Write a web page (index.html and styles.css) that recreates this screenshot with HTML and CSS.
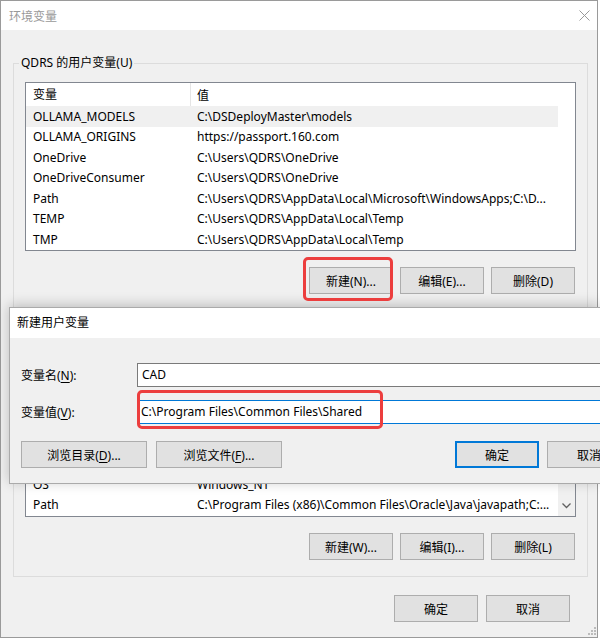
FILE: index.html
```html
<!DOCTYPE html>
<html lang="zh-CN">
<head>
  <meta charset="UTF-8" />
  <title>环境变量</title>
  <link rel="stylesheet" href="styles.css">
</head>
<body>
  <div class="window">
    <div class="titlebar">
      <span class="title">环境变量</span>
      <svg class="close" width="11" height="11" viewBox="0 0 11 11"><path d="M0.5 0.5L10.5 10.5M10.5 0.5L0.5 10.5" stroke="#999" stroke-width="1" fill="none"/></svg>
    </div>

    <div class="content">
      <!-- user variables -->
      <fieldset class="group">
        <legend>QDRS 的用户变量(U)</legend>
        <div class="list">
          <div class="list-main">
            <div class="list-head">
              <span class="head-name">变量</span>
              <span class="head-value">值</span>
            </div>
            <div class="row selected"><span class="name">OLLAMA_MODELS</span><span class="value">C:\DSDeployMaster\models</span></div>
            <div class="row"><span class="name">OLLAMA_ORIGINS</span><span class="value">https://passport.160.com</span></div>
            <div class="row"><span class="name">OneDrive</span><span class="value">C:\Users\QDRS\OneDrive</span></div>
            <div class="row"><span class="name">OneDriveConsumer</span><span class="value">C:\Users\QDRS\OneDrive</span></div>
            <div class="row"><span class="name">Path</span><span class="value">C:\Users\QDRS\AppData\Local\Microsoft\WindowsApps;C:\D...</span></div>
            <div class="row"><span class="name">TEMP</span><span class="value">C:\Users\QDRS\AppData\Local\Temp</span></div>
            <div class="row"><span class="name">TMP</span><span class="value">C:\Users\QDRS\AppData\Local\Temp</span></div>
          </div>
          <div class="list-side"></div>
        </div>
        <div class="btn-row">
          <button class="btn">新建(N)...</button>
          <button class="btn">编辑(E)...</button>
          <button class="btn">删除(D)</button>
        </div>
      </fieldset>

      <!-- system variables (top part sits under the dialog) -->
      <fieldset class="group group-sys">
        <div class="list">
          <div class="list-main list-bottom">
            <div class="row"><span class="name">OS</span><span class="value">Windows_NT</span></div>
            <div class="row"><span class="name">Path</span><span class="value">C:\Program Files (x86)\Common Files\Oracle\Java\javapath;C:...</span></div>
          </div>
          <div class="list-side scrollbar">
            <div class="scroll-track"></div>
            <div class="scroll-btn">
              <svg width="9" height="6" viewBox="0 0 9 6"><path d="M0.5 0.5L4.5 4.5L8.5 0.5" stroke="#606060" stroke-width="1.3" fill="none"/></svg>
            </div>
          </div>
        </div>
        <div class="btn-row">
          <button class="btn">新建(W)...</button>
          <button class="btn">编辑(I)...</button>
          <button class="btn">删除(L)</button>
        </div>
      </fieldset>

      <div class="footer">
        <button class="btn">确定</button>
        <button class="btn">取消</button>
      </div>
    </div>

    <svg class="grip" width="8" height="8" viewBox="0 0 8 8">
      <rect x="6" y="0" width="2" height="2" fill="#bbb"/>
      <rect x="3" y="3" width="2" height="2" fill="#bbb"/>
      <rect x="6" y="3" width="2" height="2" fill="#bbb"/>
      <rect x="0" y="6" width="2" height="2" fill="#bbb"/>
      <rect x="3" y="6" width="2" height="2" fill="#bbb"/>
      <rect x="6" y="6" width="2" height="2" fill="#bbb"/>
    </svg>

    <!-- new user variable dialog -->
    <div class="dialog">
      <div class="dlg-inner">
        <div class="dlg-title">新建用户变量</div>
        <div class="dlg-body">
          <div class="field">
            <label>变量名(<u>N</u>):</label>
            <div class="input">CAD</div>
          </div>
          <div class="field field-2">
            <label>变量值(<u>V</u>):</label>
            <div class="input focused">C:\Program Files\Common Files\Shared</div>
          </div>
          <div class="dlg-btns">
            <div class="dlg-left">
              <button class="btn btn-wide">浏览目录(<u>D</u>)...</button>
              <button class="btn btn-wide">浏览文件(<u>F</u>)...</button>
            </div>
            <div class="dlg-right">
              <button class="btn btn-default">确定</button>
              <button class="btn">取消</button>
            </div>
          </div>
        </div>
      </div>
    </div>

    <div class="mark mark-new"></div>
    <div class="mark mark-value"></div>
  </div>
</body>
</html>
```

FILE: styles.css
```css
* { margin: 0; padding: 0; box-sizing: border-box; }

html, body { overflow: hidden; }

body {
  background: #fff;
  font-family: "Noto Sans", "Noto Sans CJK SC", sans-serif;
  font-size: 12px;
  color: #000;
}

.window {
  position: relative;
  width: 598px;
  height: 638px;
  border: 1px solid #9a9a9a;
  background: #f0f0f0;
  display: flex;
  flex-direction: column;
}

.titlebar {
  height: 29px;
  background: #fff;
  display: flex;
  align-items: center;
  justify-content: space-between;
  padding: 0 7px 0 8px;
}
.title { color: #999; }
.close { display: block; margin-top: -1px; }

.content { padding: 0 9px 0 12px; }

/* group boxes ------------------------------------------------------*/
.group {
  margin-top: 25px;
  border: 1px solid #dcdcdc;
  padding: 11px 11px 16px;
  min-width: 0;
}
.group-sys { margin-top: 17px; padding-top: 19px; }
.group legend {
  margin-left: -6px;
  padding: 0 2px;
  line-height: 16px;
}

/* list views -------------------------------------------------------*/
.list {
  height: 169px;
  border: 1px solid #828790;
  background: #fff;
  display: flex;
  overflow: hidden;
}
.list-main { width: 532px; }
.list-bottom {
  display: flex;
  flex-direction: column;
  justify-content: flex-end;
  padding-bottom: 1px;
}
.list-side { flex: 1; }

.list-head { height: 23px; display: flex; align-items: center; }
.head-name {
  width: 165px;
  padding-left: 7px;
  line-height: 23px;
  border-right: 1px solid #e5e5e5;
}
.head-value { padding-left: 6px; }

.row {
  height: 20.5px;
  display: flex;
  align-items: center;
  white-space: nowrap;
}
.row.selected { background: #f0f0f0; }
.row .name { width: 164px; padding-left: 7px; flex-shrink: 0; }
.row .value { padding-left: 7px; overflow: hidden; }

.scrollbar {
  background: #f0f0f0;
  display: flex;
  flex-direction: column;
}
.scroll-track { flex: 1; }
.scroll-btn {
  height: 17px;
  display: flex;
  align-items: center;
  justify-content: center;
  margin-bottom: 2px;
}

/* buttons ----------------------------------------------------------*/
.btn-row {
  margin-top: 16px;
  padding-right: 1px;
  display: flex;
  justify-content: flex-end;
  gap: 7px;
}
.btn {
  width: 84px;
  height: 27px;
  background: #e1e1e1;
  border: 1px solid #adadad;
  font: inherit;
  color: #000;
  flex-shrink: 0;
}
.btn u { text-decoration: underline; text-underline-offset: 2px; }
.btn-wide { width: 126px; }
.btn-default {
  border-color: #0078d7;
  box-shadow: inset 0 0 0 1px #0078d7;
}

.footer {
  margin-top: 18px;
  padding-right: 18px;
  display: flex;
  justify-content: flex-end;
  gap: 8px;
}

.grip { position: absolute; right: 1px; bottom: 2px; }

/* dialog -----------------------------------------------------------*/
.dialog {
  position: absolute;
  left: 8px;
  top: 306px;
  width: 591px;
  height: 177px;
  border: 1px solid #aaa;
  border-right: 0;
  background: #f0f0f0;
  box-shadow: 0 -2px 12px rgba(0,0,0,.22);
  overflow: hidden;
}
.dlg-inner { width: 632px; }
.dlg-title {
  height: 30px;
  line-height: 30px;
  padding-left: 7px;
  background: #fff;
}
.dlg-body { padding: 25px 11px 15px; }

.field { display: flex; align-items: center; }
.field-2 { margin-top: 13px; }
.field label { width: 116px; }
.field u { text-underline-offset: 2px; }
.input {
  flex: 1;
  height: 24px;
  line-height: 22px;
  padding-left: 4px;
  background: #fff;
  border: 1px solid #7a7a7a;
}
.input.focused { border-color: #0078d7; padding-left: 3px; }

.dlg-btns {
  margin-top: 17px;
  display: flex;
  justify-content: space-between;
}
.dlg-left { display: flex; gap: 9px; }
.dlg-right { display: flex; gap: 8px; }

/* red highlight marks ----------------------------------------------*/
.mark {
  position: absolute;
  border: 3px solid #ec3e3e;
  border-radius: 5px;
}
.mark-new { left: 302px; top: 256px; width: 90px; height: 44px; }
.mark-value { left: 136px; top: 389px; width: 246px; height: 39px; }
```
